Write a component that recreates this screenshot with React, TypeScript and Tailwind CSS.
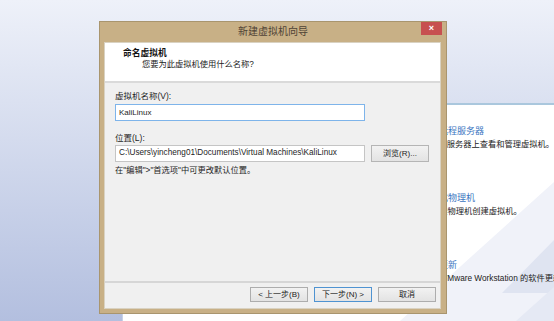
const font = "font-['Liberation_Sans','Noto_Sans_CJK_SC',sans-serif]";

const WizardButton = ({ label, primary }: { label: string; primary?: boolean }) => (
  <button
    className={`h-[15px] w-[58px] border bg-linear-to-b from-[#f2f2f2] to-[#e3e3e3] text-[8px] leading-[13px] text-[#222] ${
      primary ? "border-[#4f93d1]" : "border-[#adadad]"
    }`}
  >
    {label}
  </button>
);

const HomeItem = ({ title, desc, descShift }: { title: string; desc: string; descShift: string }) => (
  <div className="relative z-10 flex flex-col">
    <span className="h-[14px] whitespace-nowrap text-[9px] leading-[14px] text-[#3a76bf]">{title}</span>
    <span className={`h-[14px] whitespace-nowrap text-[8.25px] leading-[14px] text-[#222] ${descShift}`}>
      {desc}
    </span>
  </div>
);

export default function App() {
  return (
    <div
      className={`relative h-[321px] w-[554px] overflow-hidden bg-linear-to-b from-[#eef1f9] to-[#b3bfdf] ${font}`}
    >
      {/* workstation home panel behind the wizard */}
      <div className="flex h-full pl-[122px] pt-[103px]">
        <div className="flex min-w-0 flex-1 flex-col gap-[39px] overflow-hidden border-l border-t-2 border-l-[#c8d2e6] border-t-[#aac7dd] bg-white pl-[298px] pt-[19px]">
          <HomeItem title="连接远程服务器" desc="在远程服务器上查看和管理虚拟机。" descShift="ml-[1px]" />
          <HomeItem title="虚拟化物理机" desc="转换物理机创建虚拟机。" descShift="ml-[10px]" />
          <HomeItem title="软件更新" desc="检查 VMware Workstation 的软件更新。" descShift="ml-[2px]" />
        </div>
      </div>

      <svg className="pointer-events-none absolute inset-0" width="554" height="321" viewBox="0 0 554 321">
        <polygon points="400,321 554,182 554,321" fill="#f0f2f9" />
        <polygon points="502,293 554,240 554,293" fill="#dfe4f1" />
        <polygon points="516,321 554,287 554,321" fill="#e5e9f4" />
      </svg>

      {/* wizard window */}
      <div className="absolute left-[99px] top-[21px] z-20 flex h-[293px] w-[348px] flex-col border border-[#a9956e] bg-[#c8b086]">
        <div className="relative flex h-[20px] items-center justify-center">
          <span className="text-[10px] leading-none text-[#4f4335]">新建虚拟机向导</span>
          <div className="absolute right-[4px] top-0 flex h-[13px] w-[21px] items-center justify-center bg-[#c75050] text-[9px] font-bold leading-none text-white">
            ×
          </div>
        </div>

        <div className="mb-[4px] ml-[4px] flex w-[337px] flex-1 flex-col border border-[#d9d2c2]">
          <div className="flex h-[38px] flex-col bg-white pt-[4px]">
            <span className="pl-[18px] text-[8.75px] font-bold leading-[12px] text-[#111]">命名虚拟机</span>
            <span className="pl-[37px] text-[8.25px] leading-[12px] text-[#222]">您要为此虚拟机使用什么名称?</span>
          </div>

          <div className="flex flex-1 flex-col border-t-2 border-[#dadada] bg-[#f0f0f0] pl-[10px] pt-[7px] text-[#1e1e1e]">
            <span className="text-[8.5px] leading-[12px]">虚拟机名称(V):</span>
            <div className="mt-[2px] flex h-[17px] w-[250px] items-center border border-[#7eb4ea] bg-white pl-[3px] text-[8px]">
              KaliLinux
            </div>
            <span className="mt-[11px] text-[8.5px] leading-[12px]">位置(L):</span>
            <div className="mt-[1px] flex items-center gap-[6px]">
              <div className="flex h-[17px] w-[250px] items-center whitespace-nowrap border border-[#c5c5c5] bg-white pl-[3px] text-[8.2px]">
                C:\Users\yincheng01\Documents\Virtual Machines\KaliLinux
              </div>
              <button className="h-[17px] w-[58px] border border-[#b5b5b5] bg-linear-to-b from-[#f2f2f2] to-[#e3e3e3] text-[8px] leading-none text-[#222]">
                浏览(R)...
              </button>
            </div>
            <span className="mt-[3px] text-[8.25px] leading-[12px]">{'在"编辑">"首选项"中可更改默认位置。'}</span>
          </div>

          <div className="flex h-[27px] justify-end gap-[6px] border-t-2 border-[#d6d6d6] bg-[#f0f0f0] pr-[4px] pt-[4px]">
            <WizardButton label="< 上一步(B)" />
            <WizardButton label="下一步(N) >" primary />
            <WizardButton label="取消" />
          </div>
        </div>
      </div>
    </div>
  );
}
